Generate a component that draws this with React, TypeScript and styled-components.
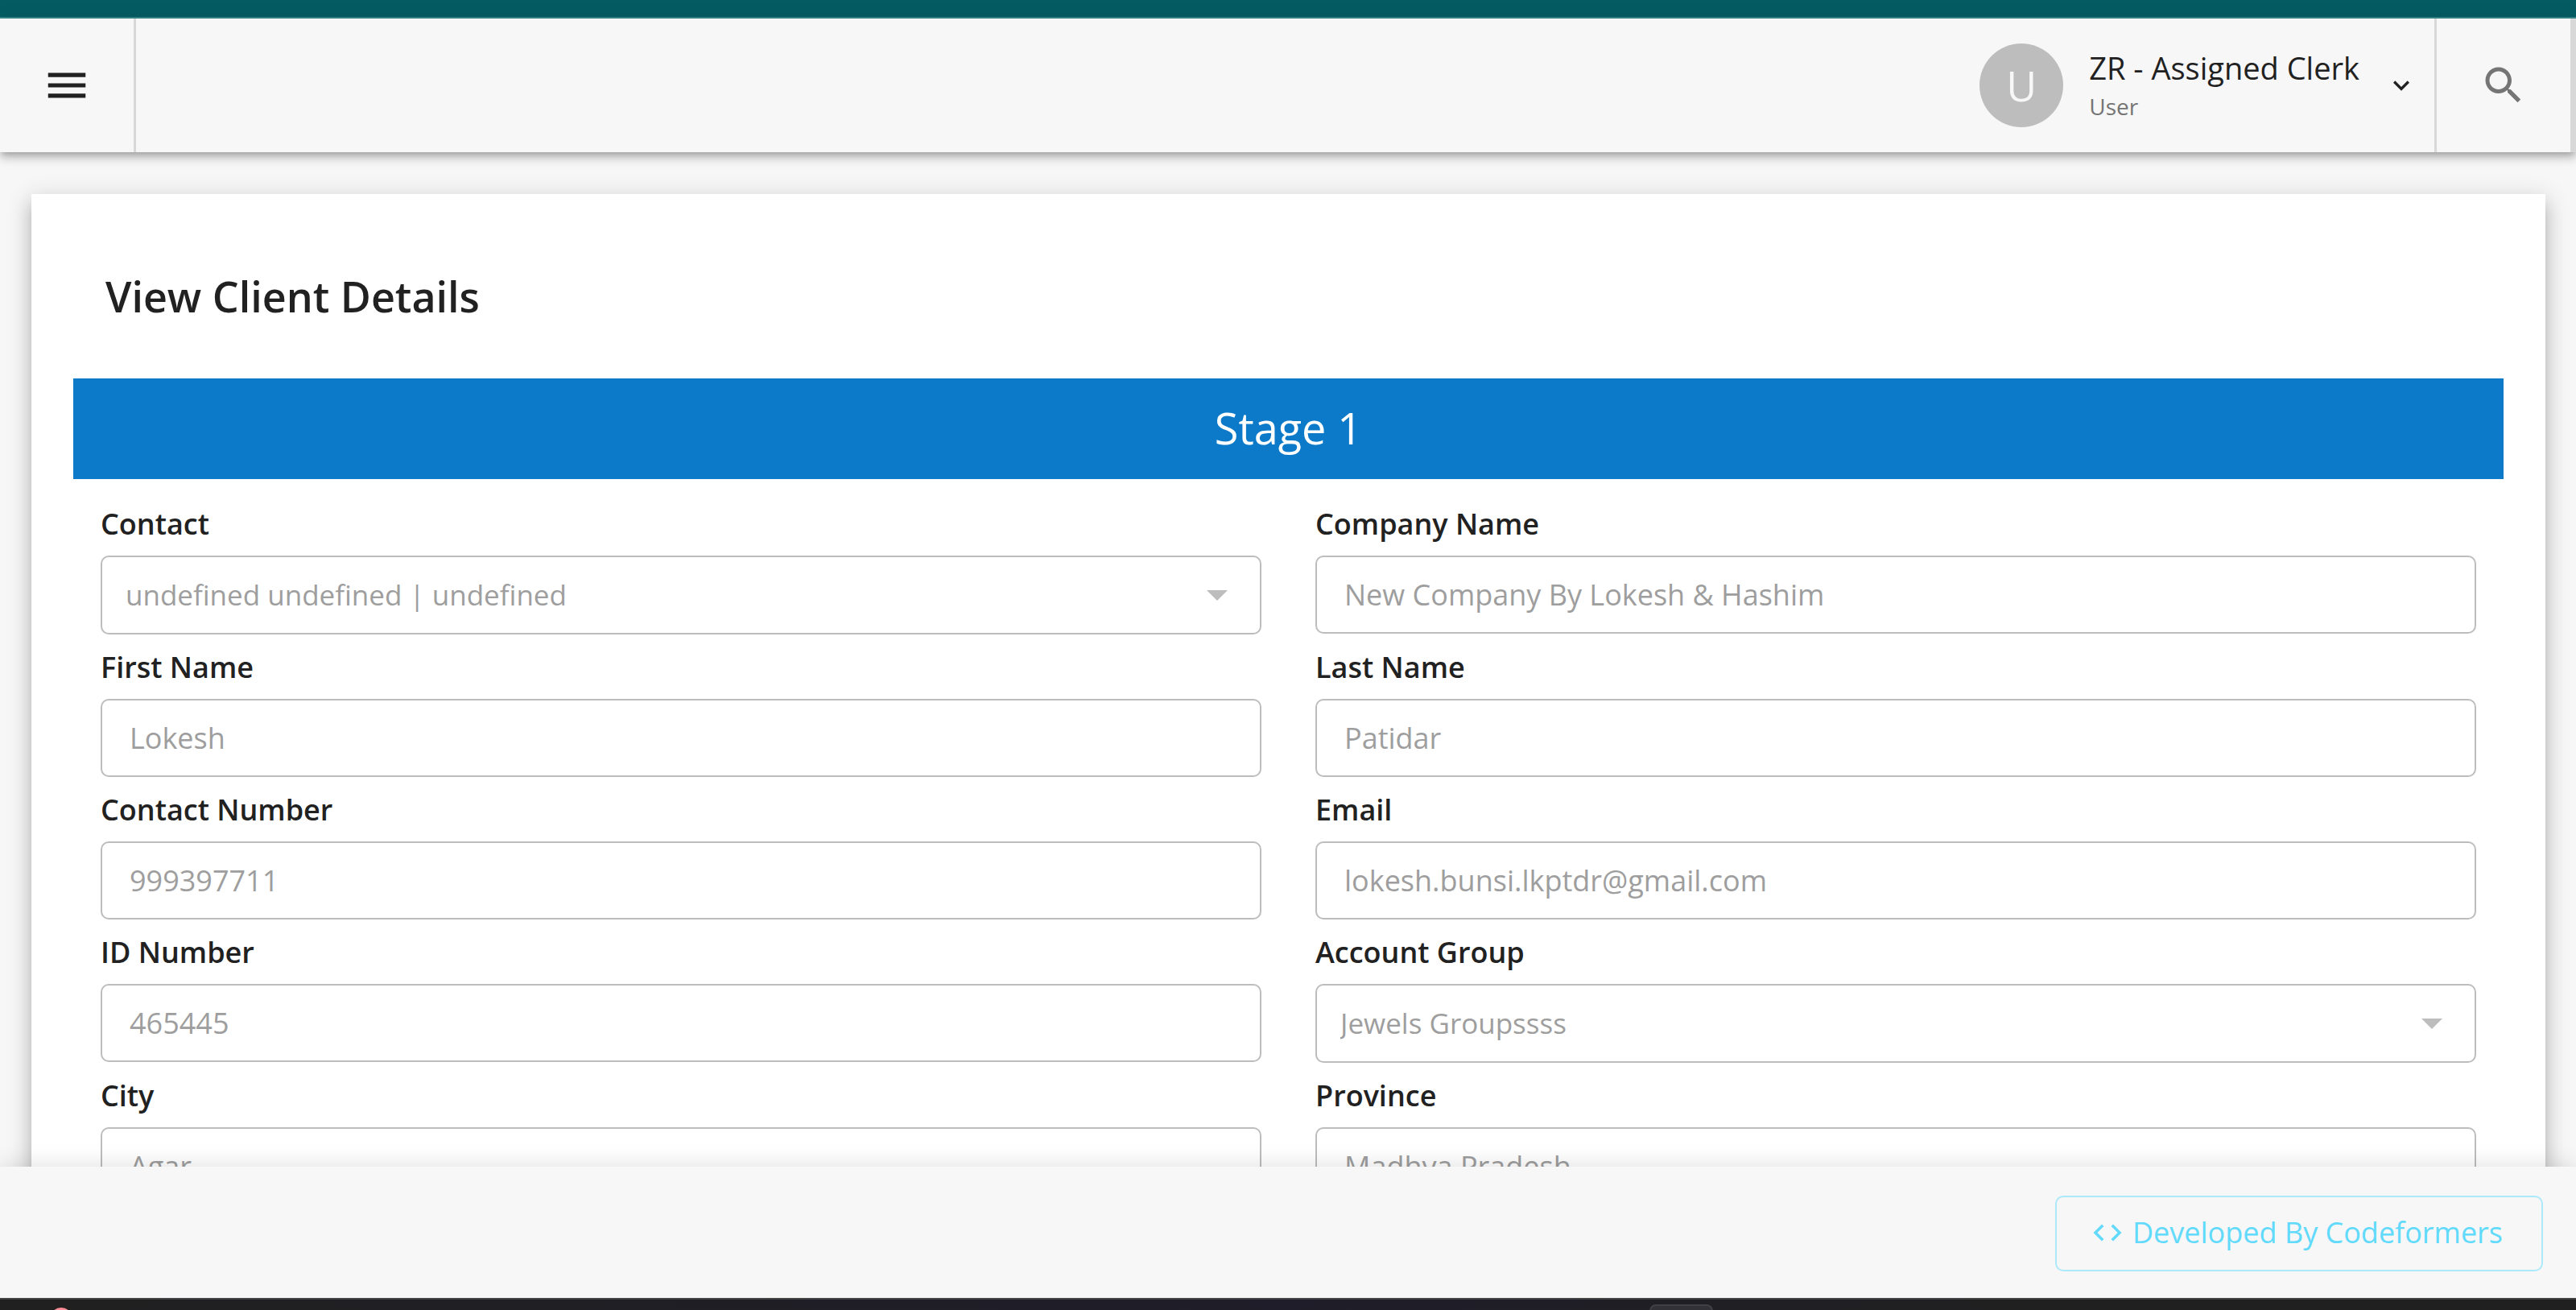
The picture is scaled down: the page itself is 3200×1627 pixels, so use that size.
import React, { useId } from "react";
import styled, { createGlobalStyle } from "styled-components";

const GlobalStyle = createGlobalStyle`
  *, *::before, *::after {
    box-sizing: border-box;
  }

  body {
    margin: 0;
    background: #f7f7f7;
    color: #212121;
    font-family: "Open Sans", "Noto Sans", sans-serif;
  }

  button, input, select {
    font: inherit;
  }
`;

const Page = styled.div`
  display: flex;
  flex-direction: column;
  height: 100vh;
  overflow: hidden;
`;

const WindowStrip = styled.div`
  flex: none;
  height: 23px;
  background: #045c62;
  border-bottom: 2px solid #35878b;
`;

const Toolbar = styled.header`
  position: relative;
  z-index: 2;
  flex: none;
  display: flex;
  height: 166px;
  background: #f7f7f7;
  border-right: 7px solid #d8d8d8;
  box-shadow:
    0 4px 8px -2px rgba(0, 0, 0, 0.2),
    0 8px 10px 0 rgba(0, 0, 0, 0.14),
    0 2px 20px 0 rgba(0, 0, 0, 0.12);
`;

const IconButton = styled.button<{ $side: "left" | "right" }>`
  display: flex;
  align-items: center;
  justify-content: center;
  width: 169px;
  padding: 0;
  border: 0 solid #d8d8d8;
  border-width: ${({ $side }) => ($side === "left" ? "0 3px 0 0" : "0 0 0 3px")};
  background: none;
  color: ${({ $side }) => ($side === "left" ? "#212121" : "#757575")};
`;

const UserButton = styled.button`
  display: flex;
  align-items: center;
  margin-left: auto;
  padding: 0 21px;
  border: 0;
  background: none;
  color: inherit;
  text-align: left;
`;

const Avatar = styled.span`
  display: flex;
  align-items: center;
  justify-content: center;
  width: 104px;
  height: 104px;
  border-radius: 50%;
  background: #bdbdbd;
  color: #f7f7f7;
  font-size: 52px;
  line-height: 72px;
`;

const UserText = styled.span`
  display: flex;
  flex-direction: column;
  margin: 0 32px;
  padding-bottom: 4px;
`;

const UserName = styled.span`
  font-size: 38px;
  line-height: 56px;
`;

const UserRole = styled.span`
  color: #757575;
  font-size: 28px;
  line-height: 40px;
`;

const Content = styled.main`
  flex: 1;
  min-height: 0;
  padding: 52px 38px 0 39px;
  overflow: hidden;
`;

const Card = styled.section`
  padding: 52px;
  background: #ffffff;
  box-shadow:
    0 10px 10px -6px rgba(0, 0, 0, 0.2),
    0 16px 20px 2px rgba(0, 0, 0, 0.14),
    0 6px 28px 4px rgba(0, 0, 0, 0.12);
`;

const Title = styled.h1`
  margin: 0;
  padding: 39px 40px 66px;
  font-size: 52px;
  font-weight: 600;
  line-height: 72px;
`;

const StageBanner = styled.h2`
  margin: 0;
  padding: 25px 26px 28px;
  background: #0d7ac9;
  color: #ffffff;
  font-size: 54px;
  font-weight: 400;
  line-height: 72px;
  text-align: center;
`;

const Fields = styled.form`
  display: grid;
  grid-template-columns: 1fr 1fr;
  column-gap: 67px;
  padding: 15px 34px;
`;

const Label = styled.label`
  display: block;
  padding: 13px 0 11px;
  font-size: 36px;
  font-weight: 600;
  line-height: 56px;
`;

const TextBox = styled.input`
  display: block;
  width: 100%;
  height: 97px;
  padding: 0 34px;
  border: 2px solid #bdbdbd;
  border-radius: 10px;
  background: #ffffff;
  color: #9e9e9e;
  font-size: 36px;
  opacity: 1;
`;

const SelectWrap = styled.div`
  position: relative;
`;

const SelectBox = styled.select`
  display: block;
  width: 100%;
  height: 98px;
  padding: 0 80px 2px 29px;
  border: 2px solid #bdbdbd;
  border-radius: 10px;
  appearance: none;
  background: #ffffff;
  color: #9e9e9e;
  font-size: 35px;
  opacity: 1;
`;

const SelectArrow = styled.svg`
  position: absolute;
  top: 43px;
  right: 42px;
  width: 26px;
  height: 13px;
  fill: #bdbdbd;
  pointer-events: none;
`;

const Footer = styled.footer`
  position: relative;
  z-index: 2;
  flex: none;
  display: flex;
  align-items: center;
  justify-content: flex-end;
  height: 163px;
  padding: 2px 41px 0;
  background: #f7f7f7;
  box-shadow: 0 0 28px rgba(0, 0, 0, 0.14);
`;

const CreditButton = styled.button`
  display: flex;
  align-items: center;
  gap: 10px;
  height: 94px;
  padding: 0 48px 2px 42px;
  border: 2px solid #ace9fa;
  border-radius: 10px;
  background: none;
  color: #61dafb;
  font-size: 36px;
  font-weight: 500;
`;

const Taskbar = styled.div`
  position: relative;
  z-index: 3;
  flex: none;
  display: flex;
  align-items: flex-start;
  height: 15px;
  overflow: hidden;
  border-top: 2px solid #454547;
  background: linear-gradient(90deg, #202020, #1f1d29 50%, #202020 80%);
`;

const TaskDot = styled.span`
  flex: none;
  width: 28px;
  height: 28px;
  margin: 10px 0 0 62px;
  border-radius: 50%;
  background: #ff8d96;
`;

const TaskTile = styled.span`
  flex: none;
  width: 79px;
  height: 40px;
  margin: 6px 33.5% 0 auto;
  border: 2px solid #414046;
  border-radius: 8px;
  background: #323137;
`;

const Icon = ({ path, size }: { path: string; size: number }) => (
  <svg width={size} height={size} viewBox="0 0 24 24" fill="currentColor" aria-hidden="true">
    <path d={path} />
  </svg>
);

const menuPath = "M3 18h18v-2H3v2zm0-5h18v-2H3v2zm0-7v2h18V6H3z";
const searchPath =
  "M15.5 14h-.79l-.28-.27C15.41 12.59 16 11.11 16 9.5 16 5.91 13.09 3 9.5 3S3 5.91 3 9.5 5.91 16 9.5 16c1.61 0 3.09-.59 4.23-1.57l.27.28v.79l5 4.99L20.49 19l-4.99-5zm-6 0C7.01 14 5 11.99 5 9.5S7.01 5 9.5 5 14 7.01 14 9.5 11.99 14 9.5 14z";
const expandPath = "M7.41 8.59 12 13.17l4.59-4.58L18 10l-6 6-6-6 1.41-1.41z";
const codePath =
  "M9.4 16.6 4.8 12l4.6-4.6L8 6l-6 6 6 6 1.4-1.4zm5.2 0 4.6-4.6-4.6-4.6L16 6l6 6-6 6-1.4-1.4z";

interface FieldData {
  label: string;
  value: string;
  select?: boolean;
}

const fields: FieldData[] = [
  { label: "Contact", value: "undefined undefined | undefined", select: true },
  { label: "Company Name", value: "New Company By Lokesh & Hashim" },
  { label: "First Name", value: "Lokesh" },
  { label: "Last Name", value: "Patidar" },
  { label: "Contact Number", value: "999397711" },
  { label: "Email", value: "lokesh.bunsi.lkptdr@gmail.com" },
  { label: "ID Number", value: "465445" },
  { label: "Account Group", value: "Jewels Groupssss", select: true },
  { label: "City", value: "Agar" },
  { label: "Province", value: "Madhya Pradesh" },
];

function Field({ label, value, select }: FieldData) {
  const id = useId();
  return (
    <div>
      <Label htmlFor={id}>{label}</Label>
      {select ? (
        <SelectWrap>
          <SelectBox id={id} disabled defaultValue={value}>
            <option>{value}</option>
          </SelectBox>
          <SelectArrow viewBox="0 0 26 13" aria-hidden="true">
            <path d="M0 0h26L13 13z" />
          </SelectArrow>
        </SelectWrap>
      ) : (
        <TextBox id={id} type="text" disabled defaultValue={value} />
      )}
    </div>
  );
}

export default function App() {
  return (
    <>
      <GlobalStyle />
      <Page>
        <WindowStrip />
        <Toolbar>
          <IconButton type="button" $side="left" aria-label="Menu">
            <Icon path={menuPath} size={62} />
          </IconButton>
          <UserButton type="button">
            <Avatar>U</Avatar>
            <UserText>
              <UserName>ZR - Assigned Clerk</UserName>
              <UserRole>User</UserRole>
            </UserText>
            <Icon path={expandPath} size={40} />
          </UserButton>
          <IconButton type="button" $side="right" aria-label="Search">
            <Icon path={searchPath} size={60} />
          </IconButton>
        </Toolbar>
        <Content>
          <Card>
            <Title>View Client Details</Title>
            <StageBanner>Stage 1</StageBanner>
            <Fields>
              {fields.map((field) => (
                <Field key={field.label} {...field} />
              ))}
            </Fields>
          </Card>
        </Content>
        <Footer>
          <CreditButton type="button">
            <Icon path={codePath} size={42} />
            Developed By Codeformers
          </CreditButton>
        </Footer>
        <Taskbar>
          <TaskDot />
          <TaskTile />
        </Taskbar>
      </Page>
    </>
  );
}
